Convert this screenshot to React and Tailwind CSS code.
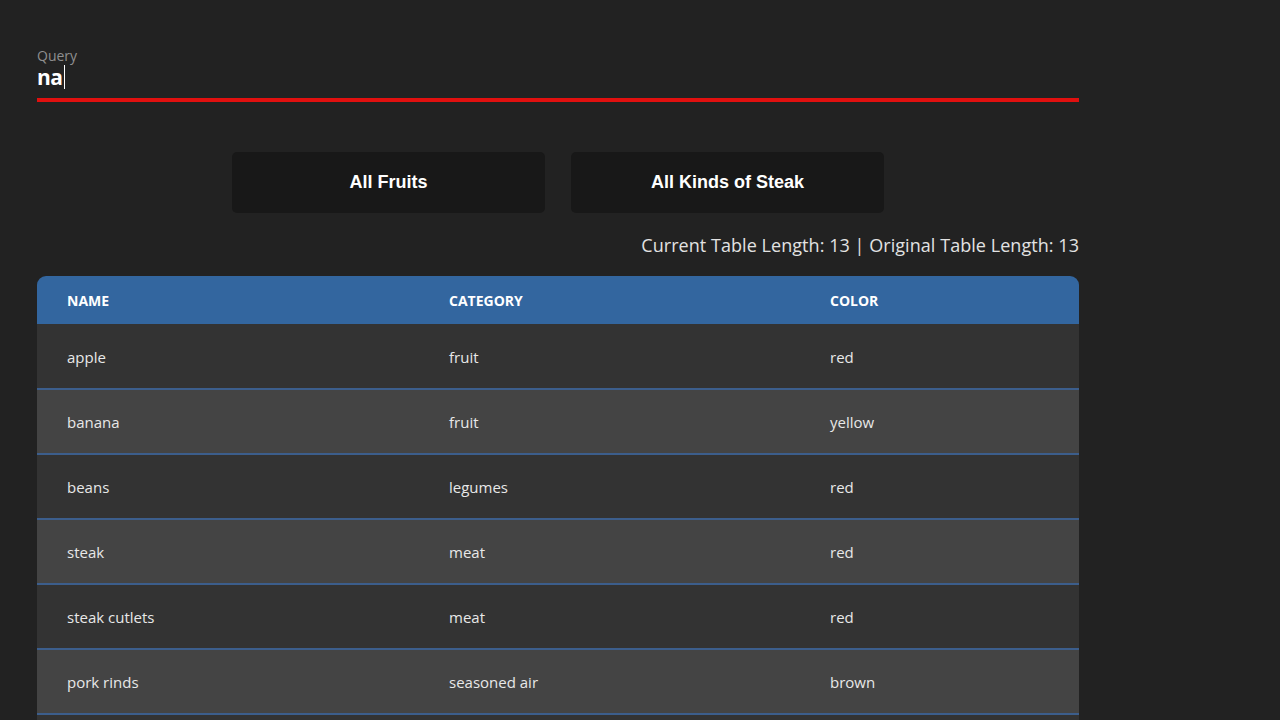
import React from 'react';

const rows = [
  { name: 'apple', category: 'fruit', color: 'red' },
  { name: 'banana', category: 'fruit', color: 'yellow' },
  { name: 'beans', category: 'legumes', color: 'red' },
  { name: 'steak', category: 'meat', color: 'red' },
  { name: 'steak cutlets', category: 'meat', color: 'red' },
  { name: 'pork rinds', category: 'seasoned air', color: 'brown' },
  { name: '', category: '', color: '' },
];

function App() {
  return (
    <div className="h-screen bg-[#222222] overflow-hidden" style={{ fontFamily: '"Open Sans", "Noto Sans", sans-serif' }}>
      <div className="w-[1042px] ml-[37px] pt-[47px]">
        {/* query input */}
        <div className="border-b-4 border-[#e0100f] pb-[8px]">
          <div className="text-[14px] leading-[17px] text-[#8f8f8f]">Query</div>
          <div className="flex items-center h-[26px] text-[21px] font-bold text-white leading-[26px]">
            <span className="tracking-[-0.5px]">na</span>
            <span className="w-[1px] h-[24px] bg-white ml-[1px]"></span>
          </div>
        </div>

        {/* filter buttons */}
        <div className="flex justify-center gap-[26px] mt-[50px]">
          <button className="w-[313px] h-[61px] bg-[#181818] rounded-[5px] text-white text-[18px] font-bold" style={{ fontFamily: '"Liberation Sans", Arial, sans-serif' }}>
            All Fruits
          </button>
          <button className="w-[313px] h-[61px] bg-[#181818] rounded-[5px] text-white text-[18px] font-bold" style={{ fontFamily: '"Liberation Sans", Arial, sans-serif' }}>
            All Kinds of Steak
          </button>
        </div>

        <div className="mt-[21px] text-right text-[18px] leading-[22px] text-[#e2e2e2] tracking-[0.05px]">
          Current Table Length: 13 | Original Table Length: 13
        </div>

        {/* table */}
        <table className="mt-[20px] w-full border-collapse table-fixed">
          <colgroup>
            <col className="w-[382px]" />
            <col className="w-[381px]" />
            <col />
          </colgroup>
          <thead>
            <tr className="bg-[#33669f] text-white text-[14px] font-bold uppercase">
              <th className="text-left pl-[30px] h-[48px] rounded-tl-[9px]">Name</th>
              <th className="text-left pl-[30px] h-[48px]">Category</th>
              <th className="text-left pl-[30px] h-[48px] rounded-tr-[9px]">Color</th>
            </tr>
          </thead>
          <tbody>
            {rows.map((r, i) => (
              <tr key={i} className={`${i % 2 === 0 ? 'bg-[#333333]' : 'bg-[#444444]'} border-b-2 border-[#3c5e8c] text-[15px] font-medium text-[#e8e8e8]`}>
                <td className="pl-[30px] pt-[2px] h-[65px]">{r.name}</td>
                <td className="pl-[30px] pt-[2px] h-[65px]">{r.category}</td>
                <td className="pl-[30px] pt-[2px] h-[65px]">{r.color}</td>
              </tr>
            ))}
          </tbody>
        </table>
      </div>
    </div>
  );
}

export default App;
